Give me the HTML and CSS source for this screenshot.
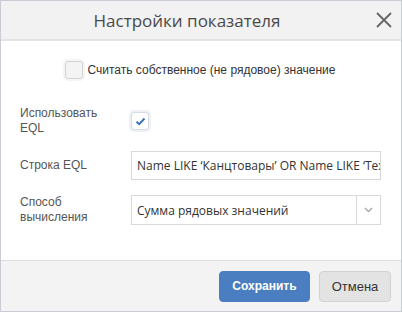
FILE: index.html
```html
<!DOCTYPE html>
<html>
<head>
  <meta charset="UTF-8">
  <title>Настройки показателя</title>
  <link rel="stylesheet" href="styles.css">
</head>
<body>
  <div class="dialog">
    <div class="dialog-header">
      <h1>Настройки показателя</h1>
      <button class="close" type="button" aria-label="Закрыть">
        <svg width="16" height="16" viewBox="0 0 16 16">
          <path d="M1 1 L15 15 M15 1 L1 15" stroke="#666" stroke-width="1.8" fill="none"/>
        </svg>
      </button>
    </div>

    <div class="dialog-body">
      <label class="own-value">
        <span class="checkbox"></span>
        <span>Считать собственное (не рядовое) значение</span>
      </label>

      <div class="row">
        <div class="row-label">Использовать<br>EQL</div>
        <div class="row-field">
          <span class="checkbox checked">
            <svg width="11" height="9" viewBox="0 0 11 9">
              <path d="M1.5 4.8 L4.2 7.2 L9.5 1.5" stroke="#3f72bd" stroke-width="2" fill="none"/>
            </svg>
          </span>
        </div>
      </div>

      <div class="row">
        <div class="row-label">Строка EQL</div>
        <div class="row-field">
          <div class="text-input">Name LIKE ‘Канцтовары’ OR Name LIKE ‘Техника’</div>
        </div>
      </div>

      <div class="row">
        <div class="row-label">Способ<br>вычисления</div>
        <div class="row-field">
          <div class="select">
            <span class="select-value">Сумма рядовых значений</span>
            <span class="select-arrow">
              <svg width="9" height="6" viewBox="0 0 9 6">
                <path d="M1 1 L4.5 4.5 L8 1" stroke="#a4a9b0" stroke-width="1.4" fill="none"/>
              </svg>
            </span>
          </div>
        </div>
      </div>
    </div>

    <div class="dialog-footer">
      <button class="btn btn-primary" type="button">Сохранить</button>
      <button class="btn btn-default" type="button">Отмена</button>
    </div>
  </div>
</body>
</html>
```

FILE: styles.css
```css
body {
  margin: 0;
  font-family: 'Liberation Sans', Arial, sans-serif;
  font-size: 12px;
  color: #333;
  background: #fff;
}
.dialog {
  width: 402px;
  height: 312px;
  box-sizing: border-box;
  border: 1px solid #c9ccd3;
  display: flex;
  flex-direction: column;
  background: #fff;
}
.dialog-header {
  height: 38px;
  padding-right: 28px;
  background: #f2f2f2;
  border-bottom: 2px solid #e3e3e3;
  display: flex;
  align-items: center;
  justify-content: center;
  position: relative;
}
.dialog-header h1 {
  margin: 0;
  font-family: 'Open Sans', sans-serif;
  font-weight: normal;
  font-size: 17px;
  color: #4a4a4a;
}
.close {
  position: absolute;
  right: 9px;
  top: 11px;
  padding: 0;
  border: none;
  background: none;
  width: 16px;
  height: 16px;
  cursor: pointer;
}
.dialog-body {
  flex: 1;
  padding: 20px 21px 0 19px;
}
.own-value {
  display: flex;
  align-items: center;
  justify-content: center;
  gap: 5px;
  margin-bottom: 27px;
}
.checkbox {
  width: 16px;
  height: 16px;
  border: 1px solid #d3d3d3;
  border-radius: 3px;
  background: #f4f4f4;
  box-shadow: 0 0 0 2px #f5f5f5;
  display: flex;
  align-items: center;
  justify-content: center;
}
.checkbox.checked {
  background: #fff;
  border-color: #d7dbe2;
  box-shadow: 0 0 0 2px #eef1f6;
}
.row {
  display: flex;
  align-items: center;
  margin-bottom: 15px;
}
.row-label {
  width: 111px;
  flex-shrink: 0;
  color: #555;
  line-height: 15px;
}
.row-field {
  width: 250px;
  flex-shrink: 0;
}
.text-input,
.select {
  box-sizing: border-box;
  height: 29px;
  border: 1px solid #d9d9d9;
  background: #fff;
  font-family: 'Open Sans', sans-serif;
  font-size: 12px;
  color: #333;
  display: flex;
  align-items: center;
  white-space: nowrap;
  overflow: hidden;
}
.text-input {
  padding-left: 5px;
}
.select {
  height: 30px;
}
.select-value {
  flex: 1;
  padding-left: 5px;
}
.select-arrow {
  width: 23px;
  height: 100%;
  border-left: 1px solid #d9d9d9;
  display: flex;
  align-items: center;
  justify-content: center;
}
.dialog-footer {
  height: 50px;
  background: #f3f3f3;
  border-top: 1px solid #dcdcdc;
  display: flex;
  align-items: center;
  justify-content: flex-end;
  gap: 9px;
  padding-right: 10px;
}
.btn {
  height: 31px;
  border-radius: 4px;
  font-family: 'Liberation Sans', Arial, sans-serif;
  font-size: 13px;
  cursor: pointer;
}
.btn-primary {
  width: 91px;
  background: #4a7ec0;
  border: 1px solid #4a7ec0;
  color: #fff;
  font-size: 12px;
  font-weight: bold;
}
.btn-default {
  width: 72px;
  background: #e3e3e3;
  border: 1px solid #d2d2d2;
  color: #333;
}
```
